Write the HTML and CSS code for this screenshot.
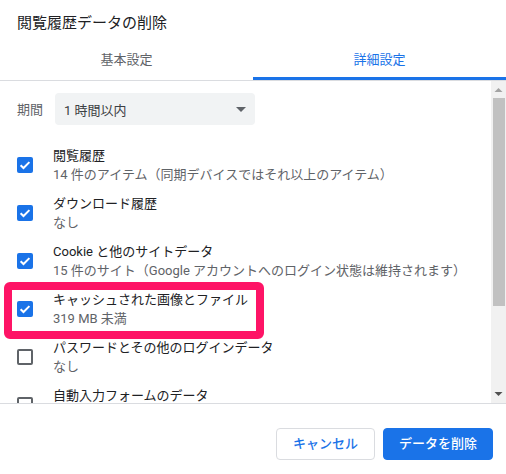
FILE: index.html
```html
<!DOCTYPE html>
<html lang="ja">
<head>
<meta charset="utf-8">
<title>閲覧履歴データの削除</title>
<link rel="stylesheet" href="styles.css">
</head>
<body>
<div class="dialog">
  <div class="title">閲覧履歴データの削除</div>
  <div class="tabs">
    <div class="tab">基本設定</div>
    <div class="tab active">詳細設定</div>
  </div>
  <div class="body">
    <div class="content">
      <div class="period">
        <span class="period-label">期間</span>
        <div class="select">
          <span>1 時間以内</span>
          <svg class="arrow" width="10" height="5" viewBox="0 0 10 5"><path d="M0 0H10L5 5Z" fill="#5f6368"/></svg>
        </div>
      </div>
      <div class="list">
        <div class="row">
          <span class="box checked"><svg width="16" height="16" viewBox="0 0 16 16"><path d="M3.6 8.2L6.5 11L12.4 5.1" fill="none" stroke="#fff" stroke-width="2"/></svg></span>
          <div class="texts"><div class="primary">閲覧履歴</div><div class="secondary">14 件のアイテム（同期デバイスではそれ以上のアイテム）</div></div>
        </div>
        <div class="row">
          <span class="box checked"><svg width="16" height="16" viewBox="0 0 16 16"><path d="M3.6 8.2L6.5 11L12.4 5.1" fill="none" stroke="#fff" stroke-width="2"/></svg></span>
          <div class="texts"><div class="primary">ダウンロード履歴</div><div class="secondary">なし</div></div>
        </div>
        <div class="row">
          <span class="box checked"><svg width="16" height="16" viewBox="0 0 16 16"><path d="M3.6 8.2L6.5 11L12.4 5.1" fill="none" stroke="#fff" stroke-width="2"/></svg></span>
          <div class="texts"><div class="primary">Cookie と他のサイトデータ</div><div class="secondary">15 件のサイト（Google アカウントへのログイン状態は維持されます）</div></div>
        </div>
        <div class="row marked">
          <span class="box checked"><svg width="16" height="16" viewBox="0 0 16 16"><path d="M3.6 8.2L6.5 11L12.4 5.1" fill="none" stroke="#fff" stroke-width="2"/></svg></span>
          <div class="texts"><div class="primary">キャッシュされた画像とファイル</div><div class="secondary">319 MB 未満</div></div>
          <span class="highlight"></span>
        </div>
        <div class="row">
          <span class="box"></span>
          <div class="texts"><div class="primary">パスワードとその他のログインデータ</div><div class="secondary">なし</div></div>
        </div>
        <div class="row">
          <span class="box"></span>
          <div class="texts"><div class="primary">自動入力フォームのデータ</div><div class="secondary">なし</div></div>
        </div>
      </div>
    </div>
    <div class="scrollbar">
      <div class="sb-btn"><svg width="15" height="17" viewBox="0 0 15 17"><path d="M3.5 11H11.5L7.5 7Z" fill="#a3a3a3"/></svg></div>
      <div class="sb-track"><div class="sb-thumb"></div></div>
      <div class="sb-btn"><svg width="15" height="17" viewBox="0 0 15 17"><path d="M3.5 6H11.5L7.5 10Z" fill="#505050"/></svg></div>
    </div>
  </div>
  <div class="footer">
    <button class="btn cancel">キャンセル</button>
    <button class="btn primary-btn">データを削除</button>
  </div>
</div>
</body>
</html>
```
FILE: styles.css
```css
* { box-sizing: border-box; }
html, body { margin: 0; padding: 0; background: #fff; }
body {
  font-family: Roboto, "Noto Sans CJK JP", "Noto Sans", sans-serif;
  font-size: 13px;
  color: #202124;
}
.dialog { width: 506px; height: 474px; display: flex; flex-direction: column; }
.title {
  height: 40px;
  padding: 14px 17px 0;
  font-size: 15px;
  line-height: 18px;
  color: #202124;
}
.tabs {
  display: flex;
  border-bottom: 1px solid #dadce0;
}
.tab {
  flex: 1;
  height: 40px;
  padding-top: 3px;
  line-height: 34px;
  text-align: center;
  color: #5f6368;
  border-bottom: 3px solid transparent;
}
.tab.active { color: #1a73e8; border-bottom-color: #1a73e8; }
.body {
  height: 323px;
  display: flex;
  border-bottom: 1px solid #dadce0;
}
.content {
  flex: 1;
  min-width: 0;
  overflow: hidden;
}
.scrollbar {
  width: 15px;
  flex: none;
  display: flex;
  flex-direction: column;
  background: #f1f1f1;
}
.sb-btn { height: 17px; flex: none; }
.sb-btn svg { display: block; }
.sb-track { flex: 1; padding: 0 1px 0 2px; }
.sb-thumb { height: 208px; background: #c1c1c1; }
.period {
  display: flex;
  align-items: center;
  gap: 12px;
  padding: 12px 17px 0;
}
.period-label { color: #5f6368; width: 26px; line-height: 19px; }
.select {
  width: 200px;
  height: 32px;
  border-radius: 4px;
  background: #f1f3f4;
  display: flex;
  align-items: center;
  justify-content: space-between;
  padding: 0 9px 0 9px;
  color: #3c4043;
}
.arrow { display: block; }
.list { margin-top: 16px; }
.row {
  height: 48px;
  display: flex;
  align-items: center;
  gap: 20px;
  padding-left: 17px;
  white-space: nowrap;
}
.row.marked { position: relative; }
.box {
  width: 16px;
  height: 16px;
  flex: none;
  border: 2px solid #5f6368;
  border-radius: 2px;
  display: flex;
}
.box.checked { border: none; background: #1a73e8; }
.box svg { display: block; }
.texts { line-height: 19px; }
.primary { color: #202124; }
.secondary { color: #5f6368; }
.highlight {
  position: absolute;
  left: 4px;
  top: -3px;
  width: 260px;
  height: 57px;
  border: 8px solid #fe1466;
  border-radius: 6px;
  pointer-events: none;
}
.footer {
  flex: 1;
  display: flex;
  justify-content: flex-end;
  align-items: flex-start;
  gap: 8px;
  padding: 24px 13px 0 0;
}
.btn {
  height: 32px;
  border-radius: 4px;
  font-family: Roboto, "Noto Sans CJK JP", sans-serif;
  font-size: 13px;
  font-weight: 500;
  line-height: 30px;
  cursor: pointer;
}
.cancel { width: 99px; padding: 0; background: #fff; color: #1a73e8; border: 1px solid #dadce0; }
.primary-btn { width: 110px; padding: 0; background: #1a73e8; color: #fff; border: 1px solid #1a73e8; }
```
